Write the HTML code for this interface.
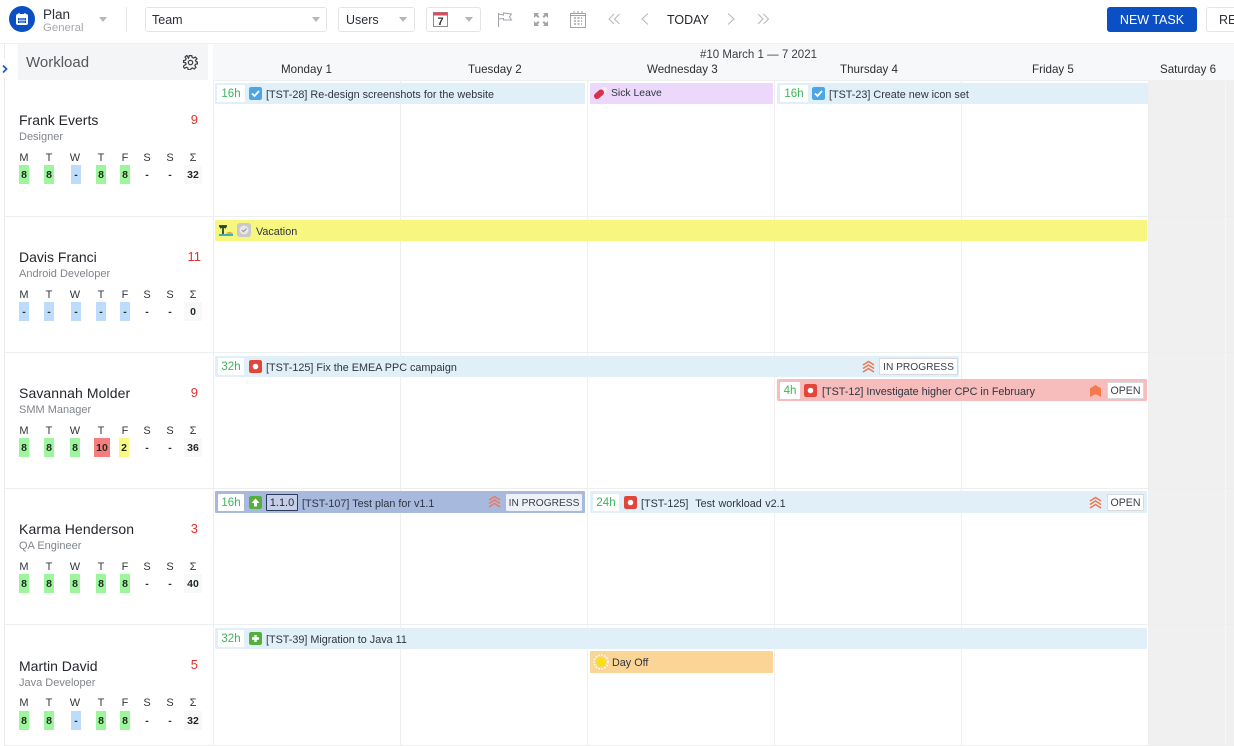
<!DOCTYPE html>
<html>
<head>
<meta charset="utf-8">
<style>
html,body{margin:0;padding:0;background:#fff}
#p{position:relative;width:1234px;height:746px;overflow:hidden;background:#fff;font-family:"Liberation Sans",sans-serif;color:#2b2f36;font-size:11px}
#p div,#p span.a,#p svg{position:absolute}
.t{position:absolute;white-space:nowrap;line-height:14px}
.sel{background:#fff;border:1px solid #e2e4e6;border-radius:3px;box-sizing:border-box;height:25px;top:7px}
.car{width:0;height:0;border-left:4.5px solid transparent;border-right:4.5px solid transparent;border-top:5px solid #b4b7bb}
.vl{width:1px;background:#eeeeee;top:81px;height:664px}
.hl{left:5px;width:1229px;height:1px;background:#edeeef}
.bar{height:21px;background:#e0eff8;border-radius:1px}
.h{background:#fff;height:17px;line-height:19px;text-align:center;color:#3eb45c;font-size:11.5px;border-radius:1px}
.bt{font-size:10.8px;white-space:nowrap;line-height:14px;color:#2f3540;margin-top:1px}
.ico{width:13px;height:13px;border-radius:2px}
.st{height:17px;line-height:17px;box-sizing:border-box;background:#fff;border:1px solid #d6d9dd;text-align:center;font-size:10.6px;color:#3a4048;border-radius:1px;white-space:nowrap}
.ip{font-size:10.2px}
.n{font-size:14px;line-height:16px;white-space:nowrap;color:#23262b}
.r{font-size:11px;line-height:13px;color:#80858b;white-space:nowrap;margin-top:1px}
.c{font-size:13px;line-height:15px;color:#e5302a;text-align:right;width:30px;left:168px}
.l{font-size:11px;line-height:12px;width:20px;text-align:center;color:#33373c;margin-top:1px}
.v{font-size:10.5px;line-height:21px;height:19px;text-align:center;font-weight:bold;color:#1e2a1e}
.g{background:#9df59d}.b{background:#bddcfb}.y{background:#f9f97f}.e{background:#f77d7d}
.s{background:#f8f8f8}
.d{font-size:11.6px;line-height:14px;white-space:nowrap;color:#2c2f33;margin-top:1px}
</style>
</head>
<body>
<div id="p">
<!-- toolbar -->
<div style="left:9px;top:6px;width:26px;height:26px;border-radius:50%;background:#0b4fc4"></div>
<svg style="left:15px;top:12px" width="14" height="14" viewBox="0 0 14 14"><rect x="1" y="2" width="12" height="11" rx="2" fill="#fff"/><rect x="3" y="6" width="8" height="5" fill="#0b4fc4"/><path d="M4 1v2M10 1v2" stroke="#fff" stroke-width="1.3"/><path d="M5 6v5M7 6v5M9 6v5M3 8.500h8" stroke="#fff" stroke-width=".6"/></svg>
<div class="t" style="left:43px;top:8px;font-size:13.5px;color:#2b2f36">Plan</div>
<div class="t" style="left:43px;top:21px;font-size:11.4px;color:#a5a8ac">General</div>
<div class="car" style="left:99px;top:17px"></div>
<div style="left:126px;top:7px;width:1px;height:25px;background:#e6e7e8"></div>
<div class="sel" style="left:145px;width:182px"></div>
<div class="t" style="left:152px;top:13px;font-size:12.5px">Team</div>
<div class="car" style="left:312px;top:17px"></div>
<div class="sel" style="left:338px;width:77px"></div>
<div class="t" style="left:346px;top:13px;font-size:12.5px">Users</div>
<div class="car" style="left:399px;top:17px"></div>
<div class="sel" style="left:426px;width:55px"></div>
<svg style="left:433px;top:12px" width="15" height="15" viewBox="0 0 15 15"><rect x=".5" y=".5" width="14" height="14" fill="#fff" stroke="#8a8d90"/><rect x=".5" y=".5" width="14" height="3" fill="#e2485a"/><text x="7.500" y="13" text-anchor="middle" font-family="Liberation Sans" font-size="11" font-weight="bold" fill="#333">7</text></svg>
<div class="car" style="left:465px;top:17px"></div>
<svg style="left:497px;top:11px" width="16" height="17" viewBox="0 0 16 17" fill="none" stroke="#a0a4a8"><path d="M1.500 16V2M1.500 3l5 1V2l8 1-2 3 2 3H6.500V7.500l-5 .5"/></svg>
<svg style="left:533px;top:12px" width="16" height="15" viewBox="0 0 16 15" fill="#a0a4a8"><path d="M1 1h5L4.500 2.600 6.500 4.500 5 6 3 4 1 6zM15 1h-5l1.500 1.600L9.500 4.500 11 6l2-2 2 2zM1 14h5l-1.500-1.600 2-1.900L5 9l-2 2-2-2zM15 14h-5l1.500-1.600-2-1.900L11 9l2 2 2-2z"/></svg>
<svg style="left:570px;top:10px" width="16" height="18" viewBox="0 0 16 18" fill="none" stroke="#a0a4a8"><rect x=".5" y="3.500" width="15" height="14"/><path d="M.5 5.500h15M4 1v3M8 1v3M12 1v3"/><path d="M4 8h8M4 11h8M4 14h8" stroke-dasharray="2 1.500" stroke-width="1.500"/></svg>
<svg style="left:607px;top:12px" width="14" height="14" viewBox="0 0 14 14" fill="none" stroke="#b8bbbf" stroke-width="1.100"><path d="M7 2L2 7l5 5M12.500 2l-5 5 5 5"/></svg>
<svg style="left:640px;top:12px" width="10" height="14" viewBox="0 0 10 14" fill="none" stroke="#b8bbbf" stroke-width="1.100"><path d="M8 1.500L2 7l6 5.500"/></svg>
<div class="t" style="left:667px;top:13px;font-size:12.5px;color:#23262b">TODAY</div>
<svg style="left:726px;top:12px" width="10" height="14" viewBox="0 0 10 14" fill="none" stroke="#b8bbbf" stroke-width="1.100"><path d="M2 1.500L8 7l-6 5.500"/></svg>
<svg style="left:756px;top:12px" width="14" height="14" viewBox="0 0 14 14" fill="none" stroke="#b8bbbf" stroke-width="1.100"><path d="M2 2l5 5-5 5M7.500 2l5 5-5 5"/></svg>
<div style="left:1107px;top:7px;width:90px;height:25px;background:#0b4fc4;border-radius:3px;color:#fff;text-align:center;line-height:26px;font-size:12.5px">NEW TASK</div>
<div class="sel" style="left:1206px;width:50px;color:#2b2f36;font-size:12.5px;line-height:24px;padding-left:12px">RE</div>

<!-- header band -->
<div style="left:0;top:43px;width:1234px;height:37px;background:#f7f8f9;border-top:1px solid #eff0f1"></div>
<div style="left:213px;top:80px;width:1021px;height:1px;background:#eeeff0"></div>
<div style="left:0;top:44px;width:213px;height:702px;background:#fff"></div>
<div style="left:4px;top:44px;width:1px;height:702px;background:#e9eaeb"></div>
<div style="left:18px;top:44px;width:190px;height:36px;background:#f4f5f6"></div>
<div style="left:-1px;top:59px;width:15px;height:19px;border-radius:0 10px 10px 0;background:#fff"></div>
<svg style="left:1px;top:64px" width="8" height="10" viewBox="0 0 8 10" fill="none" stroke="#1f5ec4" stroke-width="1.800"><path d="M2 1.500L5.500 5 2 8.500"/></svg>
<div class="t" style="left:26px;top:56px;font-size:15px;color:#54585d">Workload</div>
<svg style="left:183px;top:55px" width="15" height="15" viewBox="0 0 24 24" fill="none" stroke="#3c4046" stroke-width="2"><circle cx="12" cy="12" r="3.500"/><path d="M10 2h4l.6 3 2.400 1 2.600-1.700 2.800 2.800L20 9.600l1 2.400 2 .5v3l-3 .6-1 2.400 1.700 2.600-2.800 2.800-2.600-1.700-2.400 1-.6 1.900h-4l-.6-3-2.400-1-2.600 1.700-2.800-2.800L5 15.900l-1-2.400-3-.5v-3l3-.6 1-2.400-1.700-2.600 2.800-2.800L8.700 6.300 9.400 5z" transform="translate(0 -1) scale(1 .98)"/></svg>
<div class="t" style="left:700px;top:48px;font-size:11.5px;color:#3a3e44">#10 March 1 — 7 2021</div>
<div class="d" style="left:281px;top:62px">Monday 1</div>
<div class="d" style="left:468px;top:62px">Tuesday 2</div>
<div class="d" style="left:647px;top:62px">Wednesday 3</div>
<div class="d" style="left:840px;top:62px">Thursday 4</div>
<div class="d" style="left:1032px;top:62px">Friday 5</div>
<div class="d" style="left:1160px;top:62px">Saturday 6</div>

<!-- grid -->
<div style="left:1149px;top:81px;width:85px;height:665px;background:#f0f0f0"></div>
<div class="vl" style="left:213px"></div>
<div class="vl" style="left:400px"></div>
<div class="vl" style="left:587px"></div>
<div class="vl" style="left:774px"></div>
<div class="vl" style="left:961px"></div>
<div class="vl" style="left:1148px"></div>
<div class="vl" style="left:1225px;background:#f6f6f6"></div>
<div class="hl" style="top:216px"></div>
<div class="hl" style="top:352px"></div>
<div class="hl" style="top:488px"></div>
<div class="hl" style="top:624px"></div>
<div class="hl" style="top:745px"></div>

<!-- Frank -->
<div class="n" style="left:19px;top:112px">Frank Everts</div>
<div class="r" style="left:19px;top:130px">Designer</div>
<div class="c" style="top:112px">9</div>
<div class="l" style="left:14px;top:151px">M</div><div class="l" style="left:39px;top:151px">T</div><div class="l" style="left:65px;top:151px">W</div><div class="l" style="left:91px;top:151px">T</div><div class="l" style="left:115px;top:151px">F</div><div class="l" style="left:137px;top:151px">S</div><div class="l" style="left:160px;top:151px">S</div><div class="l" style="left:183px;top:151px">Σ</div>
<div class="v g" style="left:19px;top:165px;width:10px">8</div><div class="v g" style="left:44px;top:165px;width:10px">8</div><div class="v b" style="left:71px;top:165px;width:10px">-</div><div class="v g" style="left:96px;top:165px;width:10px">8</div><div class="v g" style="left:120px;top:165px;width:10px">8</div><div class="v" style="left:142px;top:165px;width:10px">-</div><div class="v" style="left:165px;top:165px;width:10px">-</div><div class="v s" style="left:184px;top:165px;width:18px">32</div>

<!-- Davis -->
<div class="n" style="left:19px;top:249px">Davis Franci</div>
<div class="r" style="left:19px;top:267px">Android Developer</div>
<div class="c" style="top:249px;left:171px">11</div>
<div class="l" style="left:14px;top:288px">M</div><div class="l" style="left:39px;top:288px">T</div><div class="l" style="left:65px;top:288px">W</div><div class="l" style="left:91px;top:288px">T</div><div class="l" style="left:115px;top:288px">F</div><div class="l" style="left:137px;top:288px">S</div><div class="l" style="left:160px;top:288px">S</div><div class="l" style="left:183px;top:288px">Σ</div>
<div class="v b" style="left:19px;top:302px;width:10px">-</div><div class="v b" style="left:44px;top:302px;width:10px">-</div><div class="v b" style="left:71px;top:302px;width:10px">-</div><div class="v b" style="left:96px;top:302px;width:10px">-</div><div class="v b" style="left:120px;top:302px;width:10px">-</div><div class="v" style="left:142px;top:302px;width:10px">-</div><div class="v" style="left:165px;top:302px;width:10px">-</div><div class="v s" style="left:184px;top:302px;width:18px">0</div>

<!-- Savannah -->
<div class="n" style="left:19px;top:385px;letter-spacing:.1px">Savannah Molder</div>
<div class="r" style="left:19px;top:403px">SMM Manager</div>
<div class="c" style="top:385px">9</div>
<div class="l" style="left:14px;top:424px">M</div><div class="l" style="left:39px;top:424px">T</div><div class="l" style="left:65px;top:424px">W</div><div class="l" style="left:91px;top:424px">T</div><div class="l" style="left:115px;top:424px">F</div><div class="l" style="left:137px;top:424px">S</div><div class="l" style="left:160px;top:424px">S</div><div class="l" style="left:183px;top:424px">Σ</div>
<div class="v g" style="left:19px;top:438px;width:10px">8</div><div class="v g" style="left:44px;top:438px;width:10px">8</div><div class="v g" style="left:70px;top:438px;width:10px">8</div><div class="v e" style="left:94px;top:438px;width:16px">10</div><div class="v y" style="left:119px;top:438px;width:10px">2</div><div class="v" style="left:142px;top:438px;width:10px">-</div><div class="v" style="left:165px;top:438px;width:10px">-</div><div class="v s" style="left:184px;top:438px;width:18px">36</div>

<!-- Karma -->
<div class="n" style="left:19px;top:521px;letter-spacing:.1px">Karma Henderson</div>
<div class="r" style="left:19px;top:539px">QA Engineer</div>
<div class="c" style="top:521px">3</div>
<div class="l" style="left:14px;top:560px">M</div><div class="l" style="left:39px;top:560px">T</div><div class="l" style="left:65px;top:560px">W</div><div class="l" style="left:91px;top:560px">T</div><div class="l" style="left:115px;top:560px">F</div><div class="l" style="left:137px;top:560px">S</div><div class="l" style="left:160px;top:560px">S</div><div class="l" style="left:183px;top:560px">Σ</div>
<div class="v g" style="left:19px;top:574px;width:10px">8</div><div class="v g" style="left:44px;top:574px;width:10px">8</div><div class="v g" style="left:70px;top:574px;width:10px">8</div><div class="v g" style="left:96px;top:574px;width:10px">8</div><div class="v g" style="left:120px;top:574px;width:10px">8</div><div class="v" style="left:142px;top:574px;width:10px">-</div><div class="v" style="left:165px;top:574px;width:10px">-</div><div class="v s" style="left:184px;top:574px;width:18px">40</div>

<!-- Martin -->
<div class="n" style="left:19px;top:658px">Martin David</div>
<div class="r" style="left:19px;top:676px">Java Developer</div>
<div class="c" style="top:657px">5</div>
<div class="l" style="left:14px;top:696px">M</div><div class="l" style="left:39px;top:696px">T</div><div class="l" style="left:65px;top:696px">W</div><div class="l" style="left:91px;top:696px">T</div><div class="l" style="left:115px;top:696px">F</div><div class="l" style="left:137px;top:696px">S</div><div class="l" style="left:160px;top:696px">S</div><div class="l" style="left:183px;top:696px">Σ</div>
<div class="v g" style="left:19px;top:711px;width:10px">8</div><div class="v g" style="left:44px;top:711px;width:10px">8</div><div class="v b" style="left:71px;top:711px;width:10px">-</div><div class="v g" style="left:96px;top:711px;width:10px">8</div><div class="v g" style="left:120px;top:711px;width:10px">8</div><div class="v" style="left:142px;top:711px;width:10px">-</div><div class="v" style="left:165px;top:711px;width:10px">-</div><div class="v s" style="left:184px;top:711px;width:18px">32</div>

<!-- row 1 bars -->
<div class="bar" style="left:215px;top:83px;width:370px"></div>
<div class="h" style="left:217px;top:85px;width:28px">16h</div>
<svg class="ico" style="left:249px;top:87px" viewBox="0 0 13 13"><rect width="13" height="13" rx="2" fill="#4ba6e8"/><path d="M3 6.500l2.500 2.500L10 4" fill="none" stroke="#fff" stroke-width="1.800"/></svg>
<div class="bt t" style="left:266px;top:87px">[TST-28] Re-design screenshots for the website</div>
<div class="bar" style="left:590px;top:83px;width:183px;background:#ecd8fb"></div>
<svg style="left:593px;top:86px" width="15" height="14" viewBox="0 0 15 14" fill="none" stroke-width="6"><path d="M8 6.500L11 4" stroke="#f6eef6" stroke-linecap="round"/><path d="M4 10L8 6.500" stroke="#d8314a" stroke-linecap="round"/></svg>
<div class="bt t" style="left:611px;top:86px;font-size:10.4px">Sick Leave</div>
<div class="bar" style="left:777px;top:83px;width:371px"></div>
<div class="h" style="left:780px;top:85px;width:28px">16h</div>
<svg class="ico" style="left:812px;top:87px" viewBox="0 0 13 13"><rect width="13" height="13" rx="2" fill="#4ba6e8"/><path d="M3 6.500l2.500 2.500L10 4" fill="none" stroke="#fff" stroke-width="1.800"/></svg>
<div class="bt t" style="left:829px;top:87px">[TST-23] Create new icon set</div>

<!-- vacation -->
<div class="bar" style="left:215px;top:220px;width:932px;background:#f7f77f"></div>
<svg style="left:218px;top:224px" width="16" height="13" viewBox="0 0 16 13"><path d="M1 2h8M5 2v8M2 4l3-2 3 2" stroke="#244a1e" stroke-width="1.800" fill="none"/><path d="M1 10h14v2H1z" fill="#38b6b0"/><path d="M8 10a4 4 0 0 1 7 0z" fill="#f0a830"/></svg>
<svg style="left:237px;top:223px" width="14" height="14" viewBox="0 0 14 14"><rect width="14" height="14" rx="3" fill="#c8c8c8"/><circle cx="7" cy="7" r="4.500" fill="#e8e8e8"/><path d="M4.800 7l1.700 1.700L9.500 5.500" fill="none" stroke="#9a9a9a" stroke-width="1.200"/></svg>
<div class="bt t" style="left:256px;top:224px">Vacation</div>

<!-- savannah bars -->
<div class="bar" style="left:215px;top:356px;width:744px"></div>
<div class="h" style="left:218px;top:358px;width:26px">32h</div>
<svg class="ico" style="left:249px;top:360px" viewBox="0 0 13 13"><rect width="13" height="13" rx="2" fill="#e2463a"/><circle cx="6.500" cy="6.500" r="2.800" fill="#fff"/></svg>
<div class="bt t" style="left:266px;top:360px">[TST-125] Fix the EMEA PPC campaign</div>
<svg style="left:862px;top:360px" width="13" height="13" viewBox="0 0 13 13" fill="none" stroke="#f0764f" stroke-width="1.500"><path d="M1 5l5.500-3.500L12 5M1 8.500L6.500 5 12 8.500M1 12l5.500-3.500L12 12"/></svg>
<div class="st ip" style="left:879px;top:358px;width:79px">IN PROGRESS</div>

<div class="bar" style="left:777px;top:379px;width:370px;height:22px;background:#f7bcbc"></div>
<div class="h" style="left:780px;top:382px;width:20px">4h</div>
<svg class="ico" style="left:804px;top:384px" viewBox="0 0 13 13"><rect width="13" height="13" rx="2" fill="#e2463a"/><circle cx="6.500" cy="6.500" r="2.800" fill="#fff"/></svg>
<div class="bt t" style="left:822px;top:384px">[TST-12] Investigate higher CPC in February</div>
<svg style="left:1089px;top:384px" width="13" height="13" viewBox="0 0 13 13"><path d="M1 13V4.500L6.500 1 12 4.500V13L6.500 10z" fill="#f4794f"/></svg>
<div class="st" style="left:1107px;top:382px;width:37px">OPEN</div>

<!-- karma bars -->
<div class="bar" style="left:215px;top:491px;width:370px;height:22px;background:#a8b9de"></div>
<div class="h" style="left:218px;top:494px;width:26px">16h</div>
<svg class="ico" style="left:249px;top:496px" viewBox="0 0 13 13"><rect width="13" height="13" rx="2" fill="#56ae3f"/><path d="M6.500 2.500L10.500 7H8v3.500H5V7H2.500z" fill="#fff"/></svg>
<div style="left:266px;top:494px;width:32px;height:17px;box-sizing:border-box;border:1px solid #2c3a5a;border-radius:1px;background:#c5d0e8;font-size:11px;line-height:16px;text-align:center;color:#242a36">1.1.0</div>
<div class="bt t" style="left:302px;top:496px">[TST-107] Test plan for v1.1</div>
<svg style="left:488px;top:495px" width="13" height="13" viewBox="0 0 13 13" fill="none" stroke="#ec7a60" stroke-width="1.500"><path d="M1 5l5.500-3.500L12 5M1 8.500L6.500 5 12 8.500M1 12l5.500-3.500L12 12"/></svg>
<div class="st ip" style="left:506px;top:494px;width:76px;border-color:#eef1f7;background:#eef1f7">IN PROGRESS</div>

<div class="bar" style="left:590px;top:491px;width:557px;height:22px"></div>
<div class="h" style="left:593px;top:494px;width:26px">24h</div>
<svg class="ico" style="left:624px;top:496px" viewBox="0 0 13 13"><rect width="13" height="13" rx="2" fill="#e2463a"/><circle cx="6.500" cy="6.500" r="2.800" fill="#fff"/></svg>
<div class="bt t" style="left:641px;top:496px;word-spacing:.5px">[TST-125]&nbsp; Test workload v2.1</div>
<svg style="left:1089px;top:496px" width="13" height="13" viewBox="0 0 13 13" fill="none" stroke="#f0764f" stroke-width="1.500"><path d="M1 5l5.500-3.500L12 5M1 8.500L6.500 5 12 8.500M1 12l5.500-3.500L12 12"/></svg>
<div class="st" style="left:1107px;top:494px;width:37px">OPEN</div>

<!-- martin bars -->
<div class="bar" style="left:215px;top:628px;width:932px"></div>
<div class="h" style="left:218px;top:630px;width:26px">32h</div>
<svg class="ico" style="left:249px;top:632px" viewBox="0 0 13 13"><rect width="13" height="13" rx="2" fill="#56ae3f"/><path d="M6.500 3v7M3 6.500h7" stroke="#fff" stroke-width="2.400"/></svg>
<div class="bt t" style="left:266px;top:632px">[TST-39] Migration to Java 11</div>
<div class="bar" style="left:590px;top:651px;width:183px;height:22px;background:#fbd596"></div>
<svg style="left:593px;top:654px" width="16" height="16" viewBox="0 0 16 16"><circle cx="8" cy="8" r="7" fill="none" stroke="#fff" stroke-width="1.500" stroke-dasharray="1.500 1.500"/><circle cx="8" cy="8" r="4.800" fill="#f7e015"/></svg>
<div class="bt t" style="left:612px;top:655px">Day Off</div>
</div>
</body>
</html>
